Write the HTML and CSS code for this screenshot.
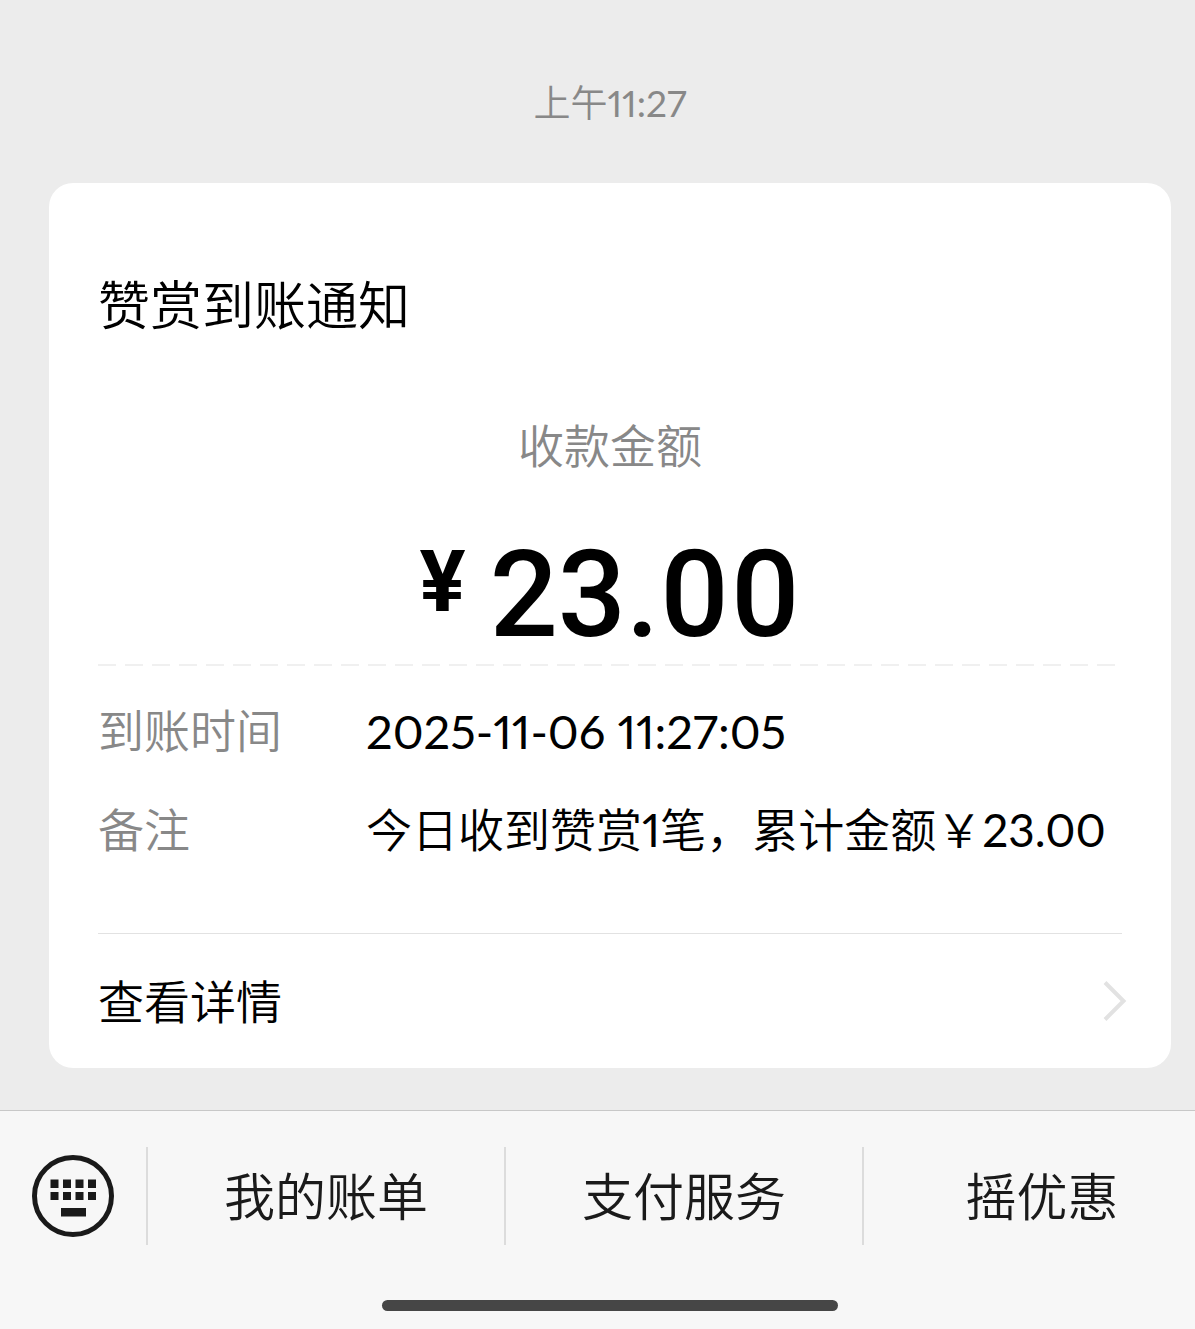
FILE: index.html
```html
<!DOCTYPE html>
<html lang="zh-CN">
<head>
  <meta charset="UTF-8">
  <meta name="viewport" content="width=device-width, initial-scale=1.0">
  <title>赞赏到账通知</title>
  <link rel="stylesheet" href="styles.css">
</head>
<body>
  <div class="screen">
    <main class="chat">
      <time class="chat-time" datetime="11:27">上午11:27</time>

      <article class="card">
        <h1 class="card-title">赞赏到账通知</h1>
        <p class="amount-label">收款金额</p>
        <p class="amount"><span class="currency">¥</span><span class="number">23.00</span></p>

        <dl class="details">
          <dt>到账时间</dt>
          <dd class="date">2025-11-06 11:27:05</dd>
          <dt>备注</dt>
          <dd>今日收到赞赏1笔，累计金额￥23.00</dd>
        </dl>

        <a class="card-link" href="#">
          <span>查看详情</span>
          <svg class="arrow" viewBox="0 0 24 42" aria-hidden="true">
            <path d="M2 2.500L20.500 21L2 39.500" />
          </svg>
        </a>
      </article>
    </main>

    <footer class="bottom">
      <nav class="menu">
        <button class="keyboard" type="button" aria-label="键盘">
          <svg viewBox="0 0 82 82" aria-hidden="true">
            <circle cx="41" cy="41" r="38.500" />
            <path d="M18.500 24.500h8v8.500h-8zM31 24.500h8v8.500h-8zM43.500 24.500h8v8.500h-8zM56 24.500h8v8.500h-8zM18.500 37h8v8h-8zM31 37h8v8h-8zM43.500 37h8v8h-8zM56 37h8v8h-8zM29 53h25v8.500h-25z" />
          </svg>
        </button>
        <button class="menu-item" type="button">我的账单</button>
        <button class="menu-item" type="button">支付服务</button>
        <button class="menu-item" type="button">摇优惠</button>
      </nav>
      <div class="home-bar"></div>
    </footer>
  </div>
</body>
</html>
```
FILE: styles.css
```css
* {
  box-sizing: border-box;
}
body {
  margin: 0;
  background: #ececec;
  color: #000;
  font-family: Lato, 'Noto Sans CJK SC DemiLight', 'Noto Sans CJK SC', sans-serif;
  font-variant-numeric: proportional-nums;
  overflow-x: hidden;
}
h1, p, dl, dd {
  margin: 0;
}

/* The screen runs a little past the right edge */
.screen {
  display: flex;
  flex-direction: column;
  min-height: 100vh;
  margin-right: -25px;
}
.chat {
  flex: 1;
  display: flex;
  flex-direction: column;
  padding: 76px 49px 42px;
}
.chat-time {
  margin-bottom: 53px;
  color: #888;
  font-size: 37px;
  line-height: 54px;
  text-align: center;
}

/* Card */
.card {
  padding: 86px 49px 0;
  background: #fff;
  border-radius: 24px;
}
.card-title {
  font-size: 52px;
  font-weight: 400;
  line-height: 72px;
}
.amount-label {
  margin-top: 72px;
  color: #888;
  font-size: 46px;
  line-height: 66px;
  text-align: center;
}
.amount {
  display: flex;
  justify-content: center;
  gap: 24px;
  margin-top: 52px;
  font-family: Roboto, sans-serif;
  line-height: 128px;
}
.currency {
  font-size: 86px;
  font-weight: 700;
  line-height: 102px;
}
.number {
  font-size: 120px;
  font-weight: 500;
}
.details {
  display: grid;
  grid-template-columns: 268px 1fr;
  row-gap: 33px;
  margin-top: 5px;
  padding: 34px 0 70px;
  background: repeating-linear-gradient(to right, #f0f0f0 0 18px, transparent 18px 27px) top / 100% 2px no-repeat;
  font-size: 46px;
  line-height: 66px;
}
.details dt {
  color: #888;
}
.details dd {
  white-space: nowrap;
}
.details .date {
  font-size: 47px;
}
.card-link {
  display: flex;
  align-items: center;
  justify-content: space-between;
  height: 135px;
  border-top: 1px solid #e2e2e2;
  color: #000;
  font-size: 46px;
  text-decoration: none;
}
.card-link span {
  padding-bottom: 4px;
}
.arrow {
  width: 24px;
  height: 42px;
  margin-right: -5px;
  fill: none;
  stroke: #e2e2e2;
  stroke-width: 4;
}

/* Bottom menu */
.bottom {
  padding: 36px 0 18px;
  background: #f7f7f7;
  border-top: 1px solid #c8c8c8;
}
.menu {
  display: flex;
  height: 98px;
}
.menu button {
  padding: 0;
  border: none;
  background: none;
  cursor: pointer;
}
.keyboard {
  display: flex;
  align-items: center;
  justify-content: center;
  width: 146px;
}
.keyboard svg {
  width: 82px;
  height: 82px;
  fill: #1a1a1a;
}
.keyboard circle {
  fill: none;
  stroke: #1a1a1a;
  stroke-width: 5;
}
.menu .menu-item {
  flex: 1;
  padding-bottom: 4px;
  border-left: 2px solid #dcdcdc;
  color: #1a1a1a;
  font-family: inherit;
  font-size: 51px;
}
.home-bar {
  width: 456px;
  height: 11px;
  margin: 55px auto 0;
  background: #464646;
  border-radius: 6px;
}
```
